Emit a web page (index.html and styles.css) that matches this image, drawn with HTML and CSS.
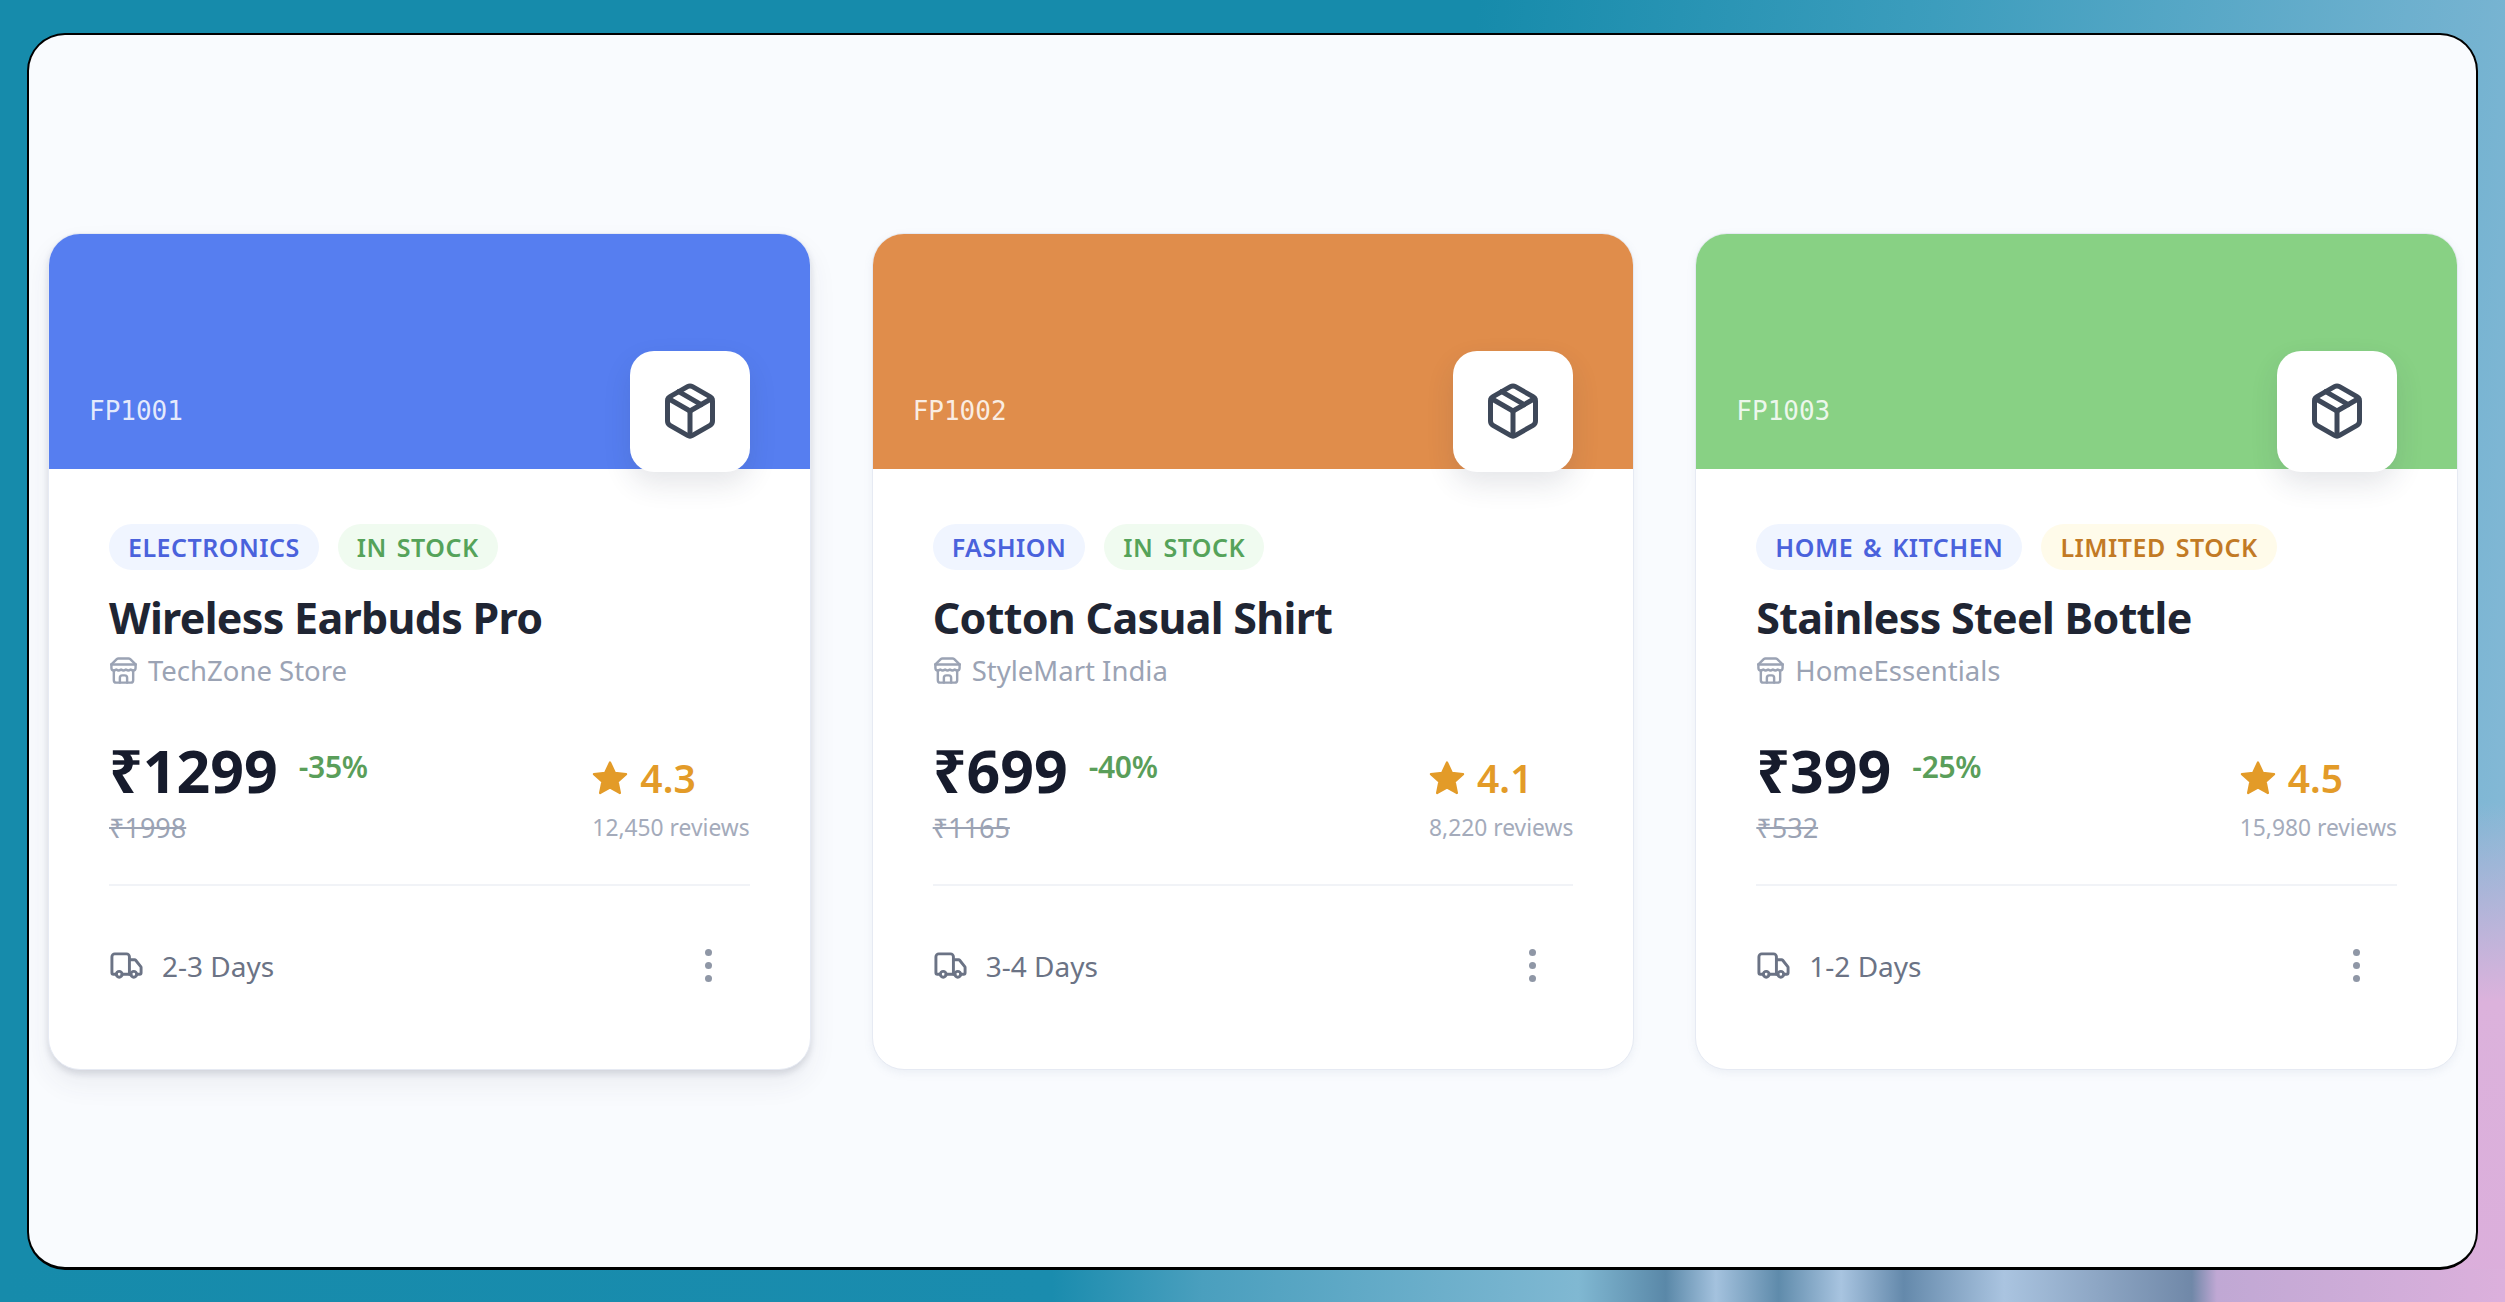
FILE: index.html
```html
<!DOCTYPE html>
<html lang="en">
<head>
    <meta charset="UTF-8">
    <title>Products</title>
    <link rel="stylesheet" href="styles.css">
</head>
<body>
    <svg class="icon-defs">
        <symbol id="i-box" viewBox="0 0 24 24">
            <path d="M11 21.73a2 2 0 0 0 2 0l7-4A2 2 0 0 0 21 16V8a2 2 0 0 0-1-1.73l-7-4a2 2 0 0 0-2 0l-7 4A2 2 0 0 0 3 8v8a2 2 0 0 0 1 1.73z"/>
            <path d="M12 22V12"/>
            <path d="m3.3 7 8.7 5 8.7-5"/>
            <path d="m7.5 4.27 9 5.15"/>
        </symbol>
        <symbol id="i-store" viewBox="0 0 24 24">
            <path d="m2 7 4.41-4.41A2 2 0 0 1 7.83 2h8.34a2 2 0 0 1 1.42.59L22 7"/>
            <path d="M4 12v8a2 2 0 0 0 2 2h12a2 2 0 0 0 2-2v-8"/>
            <path d="M15 22v-4a2 2 0 0 0-2-2h-2a2 2 0 0 0-2 2v4"/>
            <path d="M2 7h20"/>
            <path d="M22 7v3a2 2 0 0 1-2 2a2.7 2.7 0 0 1-1.59-.63.7.7 0 0 0-.82 0A2.7 2.7 0 0 1 16 12a2.7 2.7 0 0 1-1.59-.63.7.7 0 0 0-.82 0A2.7 2.7 0 0 1 12 12a2.7 2.7 0 0 1-1.59-.63.7.7 0 0 0-.82 0A2.7 2.7 0 0 1 8 12a2.7 2.7 0 0 1-1.59-.63.7.7 0 0 0-.82 0A2.7 2.7 0 0 1 4 12a2 2 0 0 1-2-2V7"/>
        </symbol>
        <symbol id="i-truck" viewBox="0 0 24 24">
            <path d="M14 18V6a2 2 0 0 0-2-2H4a2 2 0 0 0-2 2v11a1 1 0 0 0 1 1h2"/>
            <path d="M15 18H9"/>
            <path d="M19 18h2a1 1 0 0 0 1-1v-3.65a1 1 0 0 0-.22-.624l-3.48-4.35A1 1 0 0 0 17.52 8H14"/>
            <circle cx="17" cy="18" r="2"/>
            <circle cx="7" cy="18" r="2"/>
        </symbol>
        <symbol id="i-star" viewBox="0 0 24 24">
            <path d="M12 1.6l3.2 6.9 7.5.9-5.6 5.1 1.5 7.5L12 18.3l-6.6 3.7 1.5-7.5-5.6-5.1 7.5-.9z"/>
        </symbol>
    </svg>

    <div class="frame">
        <div class="cards">
            <div class="card card-active">
                <div class="card-head head-blue">
                    <span class="sku">FP1001</span>
                    <div class="box-badge"><svg class="icon"><use href="#i-box"/></svg></div>
                </div>
                <div class="card-body">
                    <div class="tags">
                        <span class="tag tag-cat">ELECTRONICS</span>
                        <span class="tag tag-ok">IN STOCK</span>
                    </div>
                    <h2>Wireless Earbuds Pro</h2>
                    <div class="seller"><svg class="icon"><use href="#i-store"/></svg>TechZone Store</div>
                    <div class="stats">
                        <div>
                            <div class="price-line"><span class="price">₹1299</span><span class="off">-35%</span></div>
                            <div class="old-price">₹1998</div>
                        </div>
                        <div class="rating">
                            <div class="score"><svg class="star"><use href="#i-star"/></svg>4.3</div>
                            <div class="reviews">12,450 reviews</div>
                        </div>
                    </div>
                    <div class="card-foot">
                        <div class="delivery"><svg class="icon"><use href="#i-truck"/></svg>2-3 Days</div>
                        <div class="more"><i></i><i></i><i></i></div>
                    </div>
                </div>
            </div>

            <div class="card">
                <div class="card-head head-orange">
                    <span class="sku">FP1002</span>
                    <div class="box-badge"><svg class="icon"><use href="#i-box"/></svg></div>
                </div>
                <div class="card-body">
                    <div class="tags">
                        <span class="tag tag-cat">FASHION</span>
                        <span class="tag tag-ok">IN STOCK</span>
                    </div>
                    <h2>Cotton Casual Shirt</h2>
                    <div class="seller"><svg class="icon"><use href="#i-store"/></svg>StyleMart India</div>
                    <div class="stats">
                        <div>
                            <div class="price-line"><span class="price">₹699</span><span class="off">-40%</span></div>
                            <div class="old-price">₹1165</div>
                        </div>
                        <div class="rating">
                            <div class="score"><svg class="star"><use href="#i-star"/></svg>4.1</div>
                            <div class="reviews">8,220 reviews</div>
                        </div>
                    </div>
                    <div class="card-foot">
                        <div class="delivery"><svg class="icon"><use href="#i-truck"/></svg>3-4 Days</div>
                        <div class="more"><i></i><i></i><i></i></div>
                    </div>
                </div>
            </div>

            <div class="card">
                <div class="card-head head-green">
                    <span class="sku">FP1003</span>
                    <div class="box-badge"><svg class="icon"><use href="#i-box"/></svg></div>
                </div>
                <div class="card-body">
                    <div class="tags">
                        <span class="tag tag-cat">HOME &amp; KITCHEN</span>
                        <span class="tag tag-low">LIMITED STOCK</span>
                    </div>
                    <h2>Stainless Steel Bottle</h2>
                    <div class="seller"><svg class="icon"><use href="#i-store"/></svg>HomeEssentials</div>
                    <div class="stats">
                        <div>
                            <div class="price-line"><span class="price">₹399</span><span class="off">-25%</span></div>
                            <div class="old-price">₹532</div>
                        </div>
                        <div class="rating">
                            <div class="score"><svg class="star"><use href="#i-star"/></svg>4.5</div>
                            <div class="reviews">15,980 reviews</div>
                        </div>
                    </div>
                    <div class="card-foot">
                        <div class="delivery"><svg class="icon"><use href="#i-truck"/></svg>1-2 Days</div>
                        <div class="more"><i></i><i></i><i></i></div>
                    </div>
                </div>
            </div>
        </div>
    </div>
</body>
</html>
```

FILE: styles.css
```css
* {
    box-sizing: border-box;
}
html, body {
    height: 100%;
}
body {
    margin: 0;
    padding: 33px 27px 32px 27px;
    font-family: "Noto Sans", "Open Sans", sans-serif;
    overflow: hidden;
    background:
        linear-gradient(90deg, #168bab 0, #1a8cae 42%, #4a9fbe 48%, #80b8d2 63%, #5a88a8 66.5%, #a4c2de 68.5%, #5f8bab 71%, #a8c4e0 73.5%, #6489ab 76%, #aac4e0 80%, #7088a8 87.5%, #c0a8d4 88.5%, #dcb0dc 100%) 0 100% / 100% 33px no-repeat,
        radial-gradient(700px 500px at 100% 100%, #dbaedb 0, #dcb2dc 60%, rgba(220, 178, 220, 0) 100%),
        linear-gradient(98deg, #168bab 0, #168bab 55%, #3c9dbd 72%, #8abbd8 100%);
}
.icon-defs {
    display: none;
}
.icon {
    fill: none;
    stroke: currentColor;
    stroke-width: 2;
    stroke-linecap: round;
    stroke-linejoin: round;
    flex: none;
}

.frame {
    height: 100%;
    display: flex;
    flex-direction: column;
    justify-content: center;
    padding: 0 18px 0 19px;
    background: #f9fbfe;
    border: 2px solid #000;
    border-bottom-width: 3px;
    border-radius: 38px;
}
.cards {
    display: grid;
    grid-template-columns: repeat(3, 1fr);
    gap: 61px;
}

.card {
    background: #fff;
    border: 1px solid #e6eaf3;
    border-radius: 32px;
    overflow: hidden;
    box-shadow: 0 3px 8px rgba(120, 135, 170, .1);
}
.card-active {
    box-shadow: 0 4px 6px rgba(50, 60, 80, .14), 0 14px 28px rgba(50, 60, 80, .07);
}

.card-head {
    position: relative;
    z-index: 1;
    height: 235px;
    padding: 0 60px 0 40px;
    display: flex;
    justify-content: space-between;
    align-items: flex-end;
}
.head-blue {
    background: #567ef0;
}
.head-orange {
    background: #e08d4b;
}
.head-green {
    background: #88d184;
}
.sku {
    margin-bottom: 43px;
    font-family: "DejaVu Sans Mono", monospace;
    font-size: 26px;
    color: rgba(255, 255, 255, .85);
}
.box-badge {
    width: 120px;
    height: 121px;
    margin-bottom: -3px;
    display: flex;
    align-items: center;
    justify-content: center;
    background: #fff;
    border-radius: 24px;
    color: #3e4859;
    box-shadow: 0 12px 28px rgba(40, 50, 70, .12);
}
.box-badge .icon {
    width: 60px;
    height: 60px;
}

.card-body {
    padding: 55px 60px 84px;
}
.tags {
    display: flex;
    gap: 19px;
}
.tag {
    height: 46px;
    padding: 0 19px;
    display: flex;
    align-items: center;
    border-radius: 23px;
    font-size: 25px;
    font-weight: 600;
    letter-spacing: .5px;
    word-spacing: 3px;
}
.tag-cat {
    background: #f0f5ff;
    color: #4a62dc;
}
.tag-ok {
    background: #f0fbf0;
    color: #55a35a;
}
.tag-low {
    background: #fffbea;
    color: #c27a25;
}

h2 {
    margin: 19px 0 0;
    font-size: 43px;
    line-height: 58px;
    font-weight: 700;
    letter-spacing: -.7px;
    color: #1f2533;
}
.seller {
    margin-top: 5px;
    display: flex;
    align-items: center;
    gap: 10px;
    font-size: 27.5px;
    line-height: 38px;
    color: #9ba3b4;
}
.seller .icon {
    width: 29px;
    height: 29px;
}

.stats {
    margin-top: 42px;
    padding-bottom: 39px;
    display: flex;
    justify-content: space-between;
    align-items: flex-end;
    border-bottom: 2px solid #f1f3f7;
}
.price-line {
    display: flex;
    align-items: flex-start;
    gap: 21px;
}
.price {
    font-size: 59px;
    line-height: 76px;
    font-weight: 700;
    color: #161b2c;
}
.off {
    margin-top: 16px;
    font-size: 30px;
    line-height: 38px;
    font-weight: 600;
    letter-spacing: -.3px;
    color: #5a9e5a;
}
.old-price {
    margin-top: 3px;
    font-size: 27px;
    line-height: 34px;
    color: #9ba3b4;
    text-decoration: line-through;
}
.score {
    margin-bottom: 6px;
    display: flex;
    align-items: center;
    gap: 12px;
    font-size: 39px;
    line-height: 54px;
    font-weight: 600;
    color: #e39b28;
}
.star {
    width: 36px;
    height: 36px;
    fill: currentColor;
    stroke: currentColor;
    stroke-width: 1.5;
    stroke-linejoin: round;
}
.reviews {
    font-size: 22.8px;
    line-height: 34px;
    color: #a4abbb;
}

.card-foot {
    margin-top: 61px;
    display: flex;
    justify-content: space-between;
    align-items: center;
}
.delivery {
    display: flex;
    align-items: center;
    gap: 18px;
    font-size: 28px;
    line-height: 38px;
    color: #6b7385;
}
.delivery .icon {
    width: 35px;
    height: 35px;
}
.more {
    width: 82px;
    display: flex;
    flex-direction: column;
    align-items: center;
    gap: 6px;
}
.more i {
    width: 7px;
    height: 7px;
    border-radius: 50%;
    background: #8f97a6;
}
```
